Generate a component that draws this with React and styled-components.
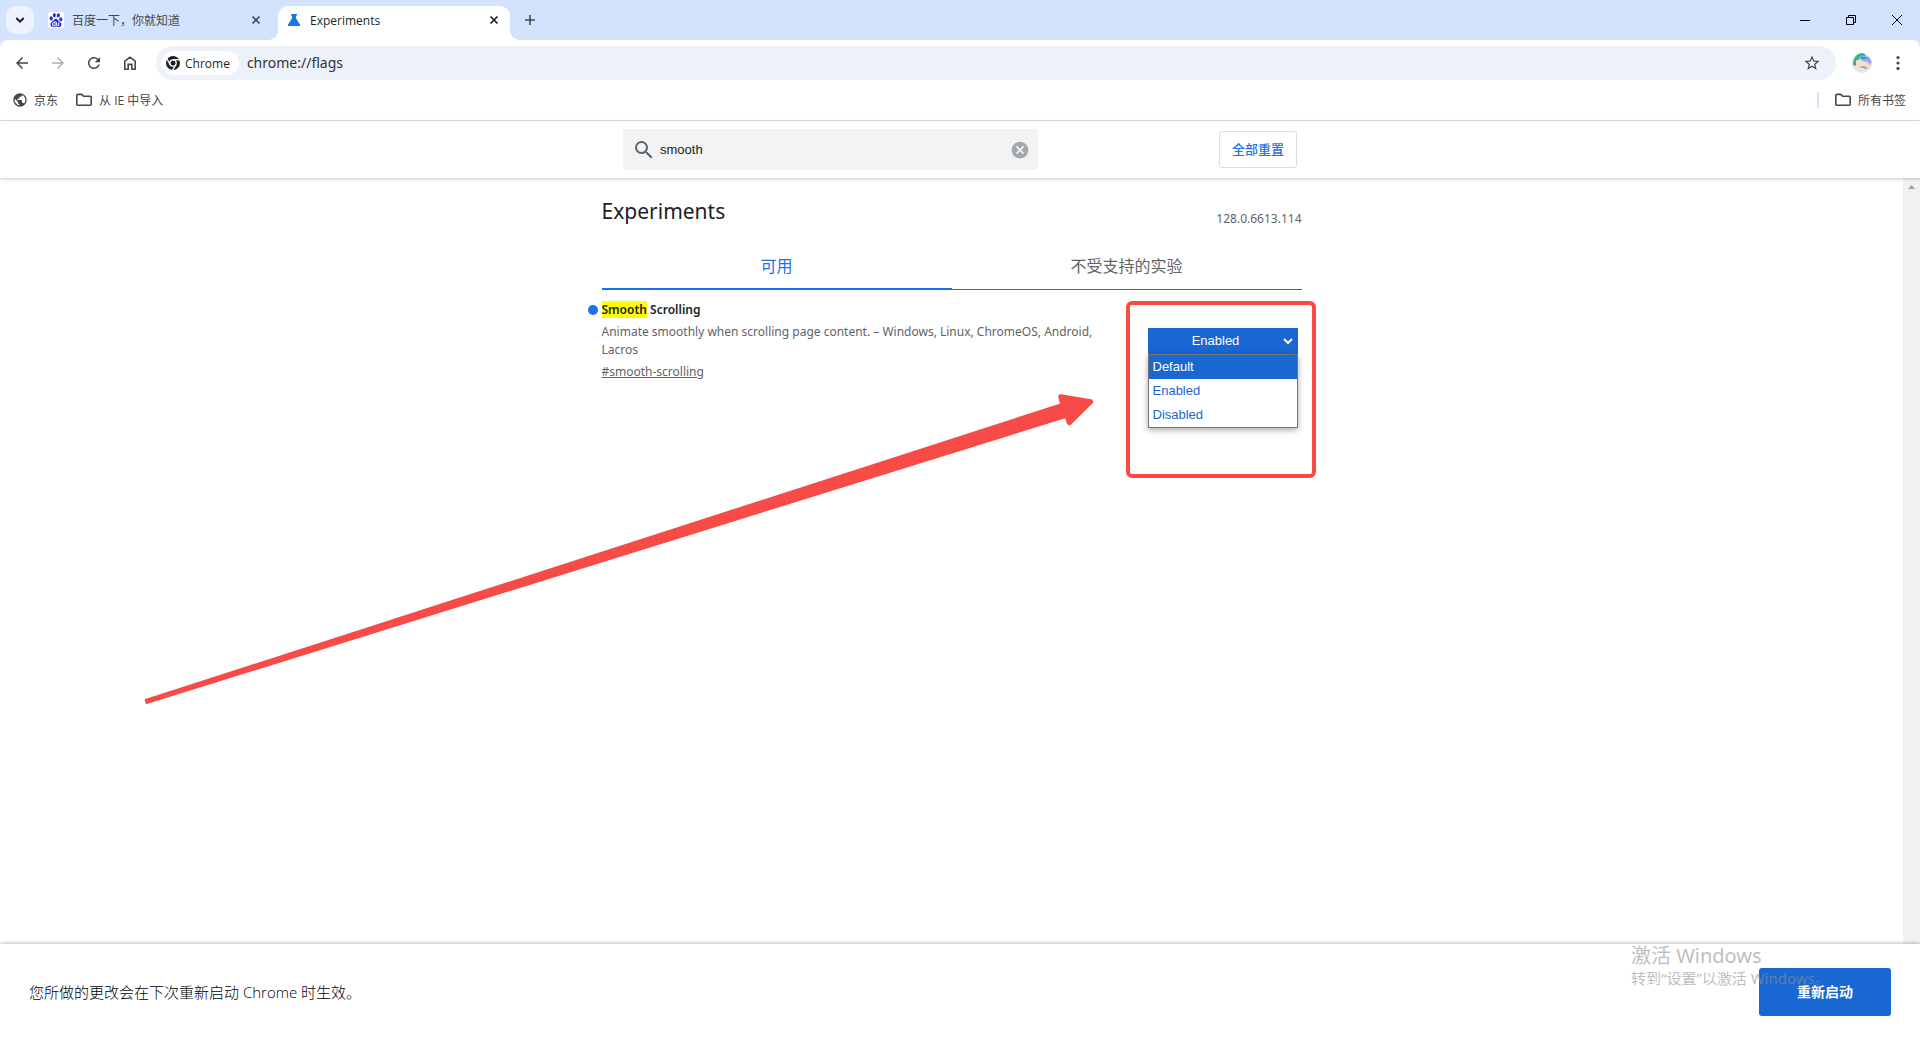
import { useState } from 'react';
import styled, { createGlobalStyle } from 'styled-components';
import { MdArrowBack, MdArrowForward, MdRefresh, MdSearch, MdCancel, MdStarOutline, MdPublic } from 'react-icons/md';
import { SiBaidu } from 'react-icons/si';

const GlobalStyle = createGlobalStyle`
  * {
    box-sizing: border-box;
  }

  body {
    margin: 0;
    background: #fff;
    color: #202124;
    font-family: 'Noto Sans', 'Noto Sans CJK SC', sans-serif;
    font-size: 12px;
  }

  button, input, select {
    font-family: inherit;
    margin: 0;
  }

  svg {
    display: block;
    flex: none;
  }
`;

const Page = styled.div`
  display: flex;
  flex-direction: column;
  min-height: 100vh;
  overflow: hidden;
  position: relative;
`;

/* ---------- browser frame ---------- */

const Frame = styled.header`
  background: #d3e3fd;
  font-family: 'Open Sans', 'Noto Sans CJK SC', sans-serif;
`;

const TabStrip = styled.div`
  display: flex;
  align-items: center;
  gap: 6px;
  height: 40px;
  padding-left: 6px;
`;

const PlainButton = styled.button`
  display: flex;
  align-items: center;
  justify-content: center;
  width: ${(props) => props.$size || 28}px;
  height: ${(props) => props.$size || 28}px;
  padding: 0;
  border: 0;
  border-radius: 50%;
  background: transparent;
  color: ${(props) => props.$color || '#474747'};
`;

const TabSearch = styled(PlainButton)`
  border-radius: 10px;
  background: #ecf2fe;
  color: #1f1f1f;
`;

const ProfileButton = styled(PlainButton)`
  margin-right: 4px;
`;

const BrowserTab = styled.div`
  position: relative;
  display: flex;
  align-items: center;
  gap: 8px;
  width: 232px;
  height: 34px;
  padding: 0 8px 6px;
  align-self: flex-end;
  border-radius: 10px 10px 0 0;
  background: ${(props) => (props.$active ? '#fff' : 'transparent')};
  color: ${(props) => (props.$active ? '#1f1f1f' : '#474747')};
  font-size: 12px;

  &::before,
  &::after {
    content: '';
    display: ${(props) => (props.$active ? 'block' : 'none')};
    position: absolute;
    bottom: 0;
    width: 10px;
    height: 10px;
  }

  &::before {
    left: -10px;
    background: radial-gradient(circle at 0 0, transparent 10px, #fff 10px);
  }

  &::after {
    right: -10px;
    background: radial-gradient(circle at 100% 0, transparent 10px, #fff 10px);
  }
`;

const TabTitle = styled.span`
  flex: 1;
  white-space: nowrap;
`;

const BaiduTile = styled.span`
  display: flex;
  align-items: center;
  justify-content: center;
  width: 16px;
  height: 16px;
  border-radius: 2px;
  background: #fff;
  color: #2932e1;
`;

const WindowControls = styled.div`
  display: flex;
  margin-left: auto;
`;

const WindowButton = styled.button`
  display: flex;
  align-items: center;
  justify-content: center;
  width: 46px;
  height: 40px;
  padding: 0;
  border: 0;
  background: transparent;
  color: #000;
`;

const Toolbar = styled.div`
  display: flex;
  align-items: center;
  gap: 8px;
  height: 46px;
  padding: 0 8px;
  border-radius: 8px 8px 0 0;
  background: #fff;
`;

const Omnibox = styled.div`
  display: flex;
  align-items: center;
  gap: 8px;
  flex: 1;
  height: 34px;
  margin: 0 8px 0 4px;
  padding: 0 10px 0 6px;
  border-radius: 17px;
  background: #ecf1fa;
`;

const SiteChip = styled.button`
  display: flex;
  align-items: center;
  gap: 5px;
  height: 24px;
  padding: 0 9px 0 4px;
  border: 0;
  border-radius: 12px;
  background: #fff;
  color: #1f1f1f;
  font-size: 12px;
`;

const UrlInput = styled.input`
  flex: 1;
  min-width: 0;
  padding: 0 0 1px;
  border: 0;
  outline: 0;
  background: transparent;
  color: #303236;
  font-family: 'Noto Sans', sans-serif;
  font-size: 14px;
`;

const BookmarkBar = styled.nav`
  display: flex;
  align-items: center;
  gap: 17px;
  height: 35px;
  padding: 0 14px 6px 12px;
  border-bottom: 1px solid #dcdcdc;
  background: #fff;
`;

const Bookmark = styled.a`
  display: flex;
  align-items: center;
  gap: 6px;
  color: #474747;
  font-size: 12px;
  text-decoration: none;
`;

const BookmarkDivider = styled.span`
  width: 2px;
  height: 16px;
  margin-left: auto;
  margin-right: -2px;
  border-radius: 1px;
  background: #d3e3fd;
`;

/* ---------- flags page ---------- */

const SearchHeader = styled.div`
  display: flex;
  justify-content: center;
  height: 57px;
  padding: 8px 16px;
  position: relative;
  box-shadow: 0 1px 3px rgba(0, 0, 0, 0.22);
`;

const SearchRow = styled.div`
  display: flex;
  align-items: center;
  justify-content: space-between;
  width: 100%;
  max-width: 674px;
`;

const SearchBox = styled.label`
  display: flex;
  align-items: center;
  width: 415px;
  height: 41px;
  padding: 0 6px 0 9px;
  border-radius: 3px;
  background: #f1f3f4;
  color: #5f6368;
`;

const SearchInput = styled.input`
  flex: 1;
  min-width: 0;
  padding: 0 0 0 4px;
  border: 0;
  outline: 0;
  background: transparent;
  color: #202124;
  font-family: 'Liberation Sans', Arial, sans-serif;
  font-size: 13px;
`;

const ResetButton = styled.button`
  height: 37px;
  padding: 0 12px 2px;
  border: 1px solid #dadce0;
  border-radius: 3px;
  background: #fff;
  color: #1a73e8;
  font-size: 13px;
  font-weight: 500;
`;

const Body = styled.div`
  display: flex;
  flex: 1;
`;

const Main = styled.main`
  flex: 1;
  display: flex;
  justify-content: center;
`;

const Column = styled.div`
  position: relative;
  width: 100%;
  max-width: 700px;
`;

const ScrollTrack = styled.div`
  display: flex;
  justify-content: center;
  width: 17px;
  padding-top: 7px;
  background: #f1f1f1;
`;

const TitleRow = styled.div`
  display: flex;
  justify-content: space-between;
  height: 66px;
  padding-top: 18px;
`;

const Title = styled.h1`
  margin: 0;
  font-size: 21px;
  font-weight: 400;
  line-height: 30px;
`;

const Version = styled.span`
  padding-top: 14px;
  color: #5f6368;
  line-height: 18px;
`;

const Tabs = styled.div`
  display: grid;
  grid-template-columns: 1fr 1fr;
`;

const Tab = styled.button`
  height: 46px;
  padding: 0 0 3px;
  border: 0;
  border-bottom: ${(props) => (props.$selected ? '2px solid #1a73e8' : '1px solid #5f6368')};
  background: transparent;
  color: ${(props) => (props.$selected ? '#1a73e8' : '#5f6368')};
  font-size: 16px;
`;

const Experiment = styled.section`
  display: flex;
  justify-content: space-between;
  padding: 11px 4px 0 0;
  color: #5f6368;
  line-height: 18px;
`;

const ExperimentText = styled.div`
  position: relative;
  width: 510px;
`;

const ChangedDot = styled.span`
  position: absolute;
  left: -14px;
  top: 4px;
  width: 10px;
  height: 10px;
  border-radius: 50%;
  background: #1a73e8;
`;

const ExperimentName = styled.h2`
  margin: 0;
  color: #202124;
  font-size: 12px;
  font-weight: 600;
  line-height: 18px;
`;

const Description = styled.p`
  margin: 4px 0;
`;

const Permalink = styled.a`
  color: #5f6368;
`;

const Mark = styled.mark`
  background: #ff0;
  color: #202124;
`;

const SelectWrap = styled.div`
  position: relative;
  width: 150px;
  margin-top: 27px;
  font-family: 'Liberation Sans', Arial, sans-serif;
  font-size: 13px;

  svg {
    position: absolute;
    right: 5px;
    top: 9px;
    pointer-events: none;
  }
`;

const StateSelect = styled.select`
  display: block;
  width: 100%;
  height: 26px;
  padding: 0 19px 2px 5px;
  border: 0;
  border-radius: 0;
  outline: 0;
  appearance: none;
  background: #1967d2;
  color: #fff;
  font-size: 13px;
  text-align: center;
  text-align-last: center;
`;

const OptionList = styled.ul`
  position: absolute;
  left: 0;
  right: 0;
  top: 26px;
  margin: 0;
  padding: 0;
  border: 1px solid #767676;
  background: #fff;
  box-shadow: 0 2px 6px rgba(0, 0, 0, 0.35);
  list-style: none;
`;

const OptionItem = styled.li`
  height: 24px;
  padding-left: 4px;
  background: ${(props) => (props.$hot ? '#1967d2' : '#fff')};
  color: ${(props) => (props.$hot ? '#fff' : '#1967d2')};
  line-height: 24px;
`;

/* ---------- red markup over the page ---------- */

const RedBox = styled.div`
  position: absolute;
  right: -14px;
  top: 123px;
  width: 190px;
  height: 177px;
  border: 4px solid #f74b47;
  border-radius: 6px;
  pointer-events: none;
`;

const RedArrow = styled.svg`
  position: absolute;
  left: -462px;
  top: 212px;
  pointer-events: none;
`;

/* ---------- restart bar ---------- */

const RestartBar = styled.footer`
  display: flex;
  align-items: center;
  justify-content: space-between;
  height: 96px;
  padding: 0 29px;
  position: relative;
  background: #fff;
  box-shadow: 0 -1px 3px rgba(0, 0, 0, 0.25);
  color: #000;
  font-family: 'Open Sans', 'Noto Sans CJK SC', sans-serif;
  font-size: 15px;
  font-weight: 300;
`;

const RestartText = styled.span`
  padding-bottom: 2px;
`;

const RestartButton = styled.button`
  width: 132px;
  height: 48px;
  padding: 0 0 2px;
  border: 0;
  border-radius: 3px;
  background: #1967d2;
  color: #fff;
  font-size: 14px;
  font-weight: 700;
`;

const Watermark = styled.div`
  position: absolute;
  right: 96px;
  bottom: 50px;
  width: 193px;
  color: rgba(145, 145, 145, 0.6);
  font-size: 15px;
  line-height: 23px;
  white-space: nowrap;
  pointer-events: none;
`;

const WatermarkTitle = styled.div`
  font-size: 20px;
`;

const CloseIcon = () => (
  <svg width="16" height="16" viewBox="0 0 16 16" stroke="currentColor" strokeWidth="1.7">
    <path d="M4.5 4.5l7 7M11.5 4.5l-7 7" />
  </svg>
);

const FolderIcon = () => (
  <svg width="18" height="16" viewBox="0 0 18 16" fill="none" stroke="#474747" strokeWidth="1.6">
    <path d="M1.8 12.2V3.4a1 1 0 0 1 1-1h4l1.8 1.8h6.6a1 1 0 0 1 1 1v7a1 1 0 0 1-1 1H2.8a1 1 0 0 1-1-1z" />
  </svg>
);

const HomeIcon = () => (
  <svg width="18" height="18" viewBox="0 0 18 18" fill="none" stroke="currentColor" strokeWidth="1.6">
    <path d="M3.8 7.2L9 3.2l5.2 4v8h-3.4v-4.8H7.2v4.8H3.8z" />
  </svg>
);

const ChromeIcon = () => (
  <svg width="14" height="14" viewBox="0 0 14 14">
    <circle cx="7" cy="7" r="7" fill="#1f1f1f" />
    <circle cx="7" cy="7" r="3.2" fill="#1f1f1f" stroke="#fff" strokeWidth="1.3" />
    <g stroke="#fff" strokeWidth="1.3">
      <path d="M7 3.8h7" />
      <path d="M7 3.8h7" transform="rotate(120 7 7)" />
      <path d="M7 3.8h7" transform="rotate(240 7 7)" />
    </g>
  </svg>
);

const FlaskIcon = () => (
  <svg width="16" height="16" viewBox="0 0 16 16" fill="#1a73e8">
    <path d="M5 2h6v1.6h-.9v2.9l3.8 6c.5.8.1 1.5-.8 1.5H2.9c-.9 0-1.3-.7-.8-1.5l3.8-6V3.6H5z" />
  </svg>
);

const AvatarIcon = () => (
  <svg width="20" height="20" viewBox="0 0 20 20">
    <defs>
      <clipPath id="avatar">
        <circle cx="10" cy="10" r="10" />
      </clipPath>
    </defs>
    <g clipPath="url(#avatar)">
      <rect width="20" height="20" fill="#e6e6e8" />
      <path d="M1 12C1 3 7-1 12 0l2 3C8 3 5 7 4 13z" fill="#3fb08c" />
      <path d="M6 6c3-4 7-4 11-2l3 5-5 3-4-4z" fill="#73c6e0" />
      <path d="M9 4c4-1 9 2 10 7l-3 1c-1-4-3-6-7-6z" fill="#6a74dd" />
      <path d="M9 6c4 0 6 3 7 6l3 1c0-3-2-6-5-7z" fill="#e9a3cf" />
      <path d="M4 7l3 1 3 1c3-1 6 0 8 3l1 3-3-1-4-1-3 1-5-1z" fill="#f2dfc8" />
      <path d="M6 14l6-1 4 2-2 1-3-1z" fill="#a59b98" />
    </g>
  </svg>
);

const options = ['Default', 'Enabled', 'Disabled'];

export default function App() {
  const [query, setQuery] = useState('smooth');
  const [state, setState] = useState('Enabled');
  const [hot, setHot] = useState('Default');
  const [tab, setTab] = useState(0);

  return (
    <Page>
      <GlobalStyle />
      <Frame>
        <TabStrip>
          <TabSearch aria-label="Search tabs">
            <svg width="10" height="8" viewBox="0 0 10 8" fill="none" stroke="currentColor" strokeWidth="2">
              <path d="M1.3 2L5 5.7 8.7 2" />
            </svg>
          </TabSearch>
          <BrowserTab>
            <BaiduTile><SiBaidu size={14} /></BaiduTile>
            <TabTitle>百度一下，你就知道</TabTitle>
            <PlainButton $size={16} aria-label="Close tab"><CloseIcon /></PlainButton>
          </BrowserTab>
          <BrowserTab $active>
            <FlaskIcon />
            <TabTitle>Experiments</TabTitle>
            <PlainButton $size={16} $color="#1f1f1f" aria-label="Close tab"><CloseIcon /></PlainButton>
          </BrowserTab>
          <PlainButton aria-label="New tab">
            <svg width="12" height="12" viewBox="0 0 12 12" stroke="currentColor" strokeWidth="1.6">
              <path d="M6 1v10M1 6h10" />
            </svg>
          </PlainButton>
          <WindowControls>
            <WindowButton aria-label="Minimize">
              <svg width="10" height="10" viewBox="0 0 10 10" stroke="currentColor"><path d="M0 5.5h10" /></svg>
            </WindowButton>
            <WindowButton aria-label="Restore">
              <svg width="10" height="10" viewBox="0 0 10 10" fill="none" stroke="currentColor">
                <path d="M.5 2.5h7v7h-7zM2.5 2.5v-2h7v7h-2" />
              </svg>
            </WindowButton>
            <WindowButton aria-label="Close">
              <svg width="10" height="10" viewBox="0 0 10 10" stroke="currentColor"><path d="M0 0l10 10M10 0L0 10" /></svg>
            </WindowButton>
          </WindowControls>
        </TabStrip>
        <Toolbar>
          <PlainButton aria-label="Back"><MdArrowBack size={18} /></PlainButton>
          <PlainButton $color="#b0b0b0" aria-label="Forward"><MdArrowForward size={18} /></PlainButton>
          <PlainButton aria-label="Reload"><MdRefresh size={18} /></PlainButton>
          <PlainButton aria-label="Home"><HomeIcon /></PlainButton>
          <Omnibox>
            <SiteChip><ChromeIcon />Chrome</SiteChip>
            <UrlInput aria-label="Address" defaultValue="chrome://flags" />
            <PlainButton aria-label="Bookmark this page"><MdStarOutline size={18} /></PlainButton>
          </Omnibox>
          <ProfileButton $size={20} aria-label="Profile"><AvatarIcon /></ProfileButton>
          <PlainButton aria-label="Menu">
            <svg width="16" height="16" viewBox="0 0 16 16" fill="currentColor">
              <circle cx="8" cy="2.6" r="1.6" />
              <circle cx="8" cy="8" r="1.6" />
              <circle cx="8" cy="13.4" r="1.6" />
            </svg>
          </PlainButton>
        </Toolbar>
        <BookmarkBar>
          <Bookmark href="#jd"><MdPublic size={16} />京东</Bookmark>
          <Bookmark href="#ie"><FolderIcon />从 IE 中导入</Bookmark>
          <BookmarkDivider />
          <Bookmark href="#all"><FolderIcon />所有书签</Bookmark>
        </BookmarkBar>
      </Frame>

      <SearchHeader>
        <SearchRow>
          <SearchBox>
            <MdSearch size={24} />
            <SearchInput aria-label="Search flags" value={query} onChange={(e) => setQuery(e.target.value)} />
            <PlainButton $size={24} $color="#a5a8ab" aria-label="Clear search" onClick={() => setQuery('')}>
              <MdCancel size={20} />
            </PlainButton>
          </SearchBox>
          <ResetButton>全部重置</ResetButton>
        </SearchRow>
      </SearchHeader>

      <Body>
        <Main>
          <Column>
            <TitleRow>
              <Title>Experiments</Title>
              <Version>128.0.6613.114</Version>
            </TitleRow>
            <Tabs>
              {['可用', '不受支持的实验'].map((name, index) => (
                <Tab key={name} $selected={tab === index} onClick={() => setTab(index)}>{name}</Tab>
              ))}
            </Tabs>
            <Experiment>
              <ExperimentText>
                <ChangedDot />
                <ExperimentName><Mark>Smooth</Mark> Scrolling</ExperimentName>
                <Description>
                  Animate smoothly when scrolling page content. – Windows, Linux, ChromeOS, Android, Lacros
                </Description>
                <Permalink href="#smooth-scrolling">#smooth-scrolling</Permalink>
              </ExperimentText>
              <SelectWrap>
                <StateSelect aria-label="Smooth Scrolling" value={state} onChange={(e) => setState(e.target.value)}>
                  {options.map((name) => <option key={name}>{name}</option>)}
                </StateSelect>
                <svg width="10" height="8" viewBox="0 0 10 8" fill="none" stroke="#fff" strokeWidth="2">
                  <path d="M1 2l4 4 4-4" />
                </svg>
                <OptionList>
                  {options.map((name) => (
                    <OptionItem key={name} $hot={hot === name} onMouseEnter={() => setHot(name)} onClick={() => setState(name)}>
                      {name}
                    </OptionItem>
                  ))}
                </OptionList>
              </SelectWrap>
            </Experiment>

            <RedBox />
            <RedArrow width="960" height="320" viewBox="140 390 960 320" fill="#f74b47" stroke="#f74b47" strokeLinejoin="round">
              <path d="M144.5 699.3L1062 403l4 15L146 704.3z" strokeWidth="0" />
              <path d="M1060.8 396.6L1090.6 401.8L1069.3 422.6L1067 416L1062.5 404z" strokeWidth="5" />
            </RedArrow>
          </Column>
        </Main>
        <ScrollTrack>
          <svg width="7" height="4" viewBox="0 0 7 4" fill="#a3a3a3"><path d="M0 4l3.5-4L7 4z" /></svg>
        </ScrollTrack>
      </Body>

      <RestartBar>
        <RestartText>您所做的更改会在下次重新启动 Chrome 时生效。</RestartText>
        <RestartButton>重新启动</RestartButton>
      </RestartBar>
      <Watermark>
        <WatermarkTitle>激活 Windows</WatermarkTitle>
        转到“设置”以激活 Windows。
      </Watermark>
    </Page>
  );
}
